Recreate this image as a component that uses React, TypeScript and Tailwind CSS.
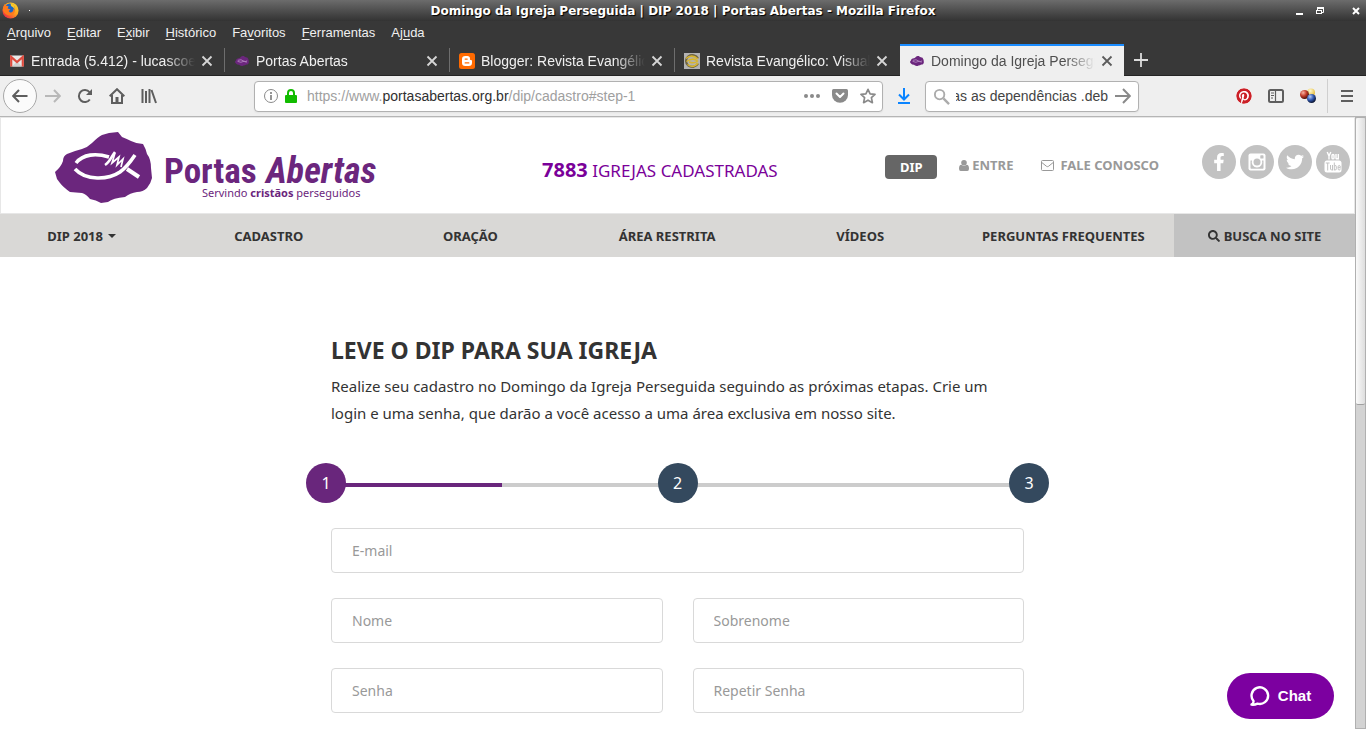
import type { ReactNode } from "react";
import { FaFacebookF, FaPinterest, FaSearch, FaTwitter } from "react-icons/fa";

const ARIAL = "font-['Liberation_Sans',Arial,sans-serif]";

const BLOB =
  "M0 40 Q6 35 8 29 Q8 24 12 22 Q19 19 27 17 Q33 15 37 11 Q43 5 47 3 L54 1 L63 0 L67 5 Q72 7 76 9 Q82 12 88 12 Q91 17 92 22 Q96 27 96 36 L97 46 Q96 51 92 56 Q88 60 82 60 Q75 61 70 65 Q58 66 53 70 L46 71 Q41 68 35 67 Q31 62 27 61 L15 60 Q8 55 5 51 L2 47 Z";

function Fish() {
  return (
    <g fill="none" stroke="#fff">
      <path d="M21 31 C28 22 41 21 54 25" strokeWidth="3.6" />
      <path d="M20 37 C31 49 53 48 65 40 C72 35 76 29 80 23" strokeWidth="3.6" />
      <path d="M50 33 C55 30 56 25 60 20" strokeWidth="2.6" />
      <path d="M60 21 L57 31 L64 25 L62 33 L68 27 L66 35" strokeWidth="1.7" />
      <path d="M72 37 L84 45" strokeWidth="4" />
    </g>
  );
}

function MiniLogo() {
  return (
    <svg viewBox="0 0 98 71" className="h-4 w-3.5 shrink-0" aria-hidden="true">
      <path d={BLOB} fill="#6b267d" />
      <path d="M20 31 Q44 20 60 36 T82 32 M18 38 Q40 52 66 36 M72 38 L84 44" fill="none" stroke="#c39bcf" strokeWidth="5" />
    </svg>
  );
}

function FirefoxIcon() {
  return (
    <svg viewBox="0 0 18 18" className="h-[17px] w-[17px]" aria-hidden="true">
      <defs>
        <linearGradient id="ff" x1="1" y1="0" x2="0.1" y2="1">
          <stop offset="0" stopColor="#ffe226" />
          <stop offset=".5" stopColor="#ff9a1f" />
          <stop offset="1" stopColor="#e9184a" />
        </linearGradient>
      </defs>
      <circle cx="9" cy="9" r="8.5" fill="url(#ff)" />
      <path d="M4 4.500 C5 1.500 9 .5 12 3 C14 5 14 9 12 11 C9 13.500 5 12 4.500 9Z" fill="#1766c9" />
      <path d="M.8 8 C1 5 2 3 3 2 L4 4 L7 4.500 L6 7 L9 8 L7 9.500 L8.500 11.200 C11 11.500 12.500 9.500 12 7 C14.500 8 14 12 11 13.500 C7 15.500 2 13 .8 8Z" fill="#ff7a1c" />
      <path d="M9 1 C12 2 14 4 13.500 8 C12 5.500 10.500 5 9.500 4Z" fill="#ffc928" />
    </svg>
  );
}

function GmailIcon() {
  return (
    <svg viewBox="0 0 14 11" className="mx-px h-3 w-3.5 shrink-0" aria-hidden="true">
      <rect width="14" height="11" rx="1" fill="#e9e9e9" />
      <path d="M2 11 L7 6 L12 11" fill="#cfcfcf" />
      <path d="M1.200 11 V1.400 L7 6.500 L12.800 1.400 V11" fill="none" stroke="#dd4b3e" strokeWidth="2.200" />
    </svg>
  );
}

function BloggerIcon() {
  return (
    <svg viewBox="0 0 16 16" className="h-4 w-4 shrink-0" aria-hidden="true">
      <rect width="16" height="16" rx="2.500" fill="#ff6a00" />
      <path d="M6.300 3 H8.300 A2.700 2.700 0 0 1 11 5.700 V6.500 Q11.200 7 12 7 Q13 7 13 8 V9.700 A3.300 3.300 0 0 1 9.700 13 H6.300 A3.300 3.300 0 0 1 3 9.700 V6.300 A3.300 3.300 0 0 1 6.300 3Z" fill="#fff" />
      <path d="M6.200 6.100 H8.200 M6.200 9.900 H9.800" stroke="#ff6a00" strokeWidth="1.300" strokeLinecap="round" />
    </svg>
  );
}

function RevistaIcon() {
  return (
    <svg viewBox="0 0 16 16" className="h-4 w-4 shrink-0" aria-hidden="true">
      <rect width="16" height="16" fill="#b3b3b3" />
      <path d="M14 5.500 A6.300 5.800 0 1 0 14 10.500" fill="none" stroke="#6f6440" strokeWidth="2.200" />
      <path d="M2 5.500 Q8 .5 14 6 M2.500 8.500 Q9 4 13.500 8 Q11 11 5 9 M14 10 Q9 16 3.500 11.500" fill="none" stroke="#d8b62f" strokeWidth="1.500" />
    </svg>
  );
}

function Cross({ color }: { color: string }) {
  return (
    <svg viewBox="0 0 12 12" className="h-3 w-3" aria-hidden="true">
      <path d="M1.500 1.500 L10.500 10.500 M10.500 1.500 L1.500 10.500" stroke={color} strokeWidth="1.800" />
    </svg>
  );
}

function Tab({ icon, title, active = false }: { icon: ReactNode; title: string; active?: boolean }) {
  return (
    <div
      className={
        active
          ? "flex h-8 w-56 min-w-0 items-center border-t-2 border-[#1a8cff] bg-[#efefef] pr-[11px] pl-[9px] text-[#4f4f4f]"
          : "flex h-8 w-[225px] min-w-0 items-center border-t-2 border-transparent pr-3 pl-[9px] text-[#f0f0f0]"
      }
    >
      <span className="flex w-4 shrink-0 justify-center">{icon}</span>
      <span className="ml-1.5 min-w-0 flex-1 overflow-hidden text-[14px] leading-5 whitespace-nowrap [mask-image:linear-gradient(to_right,black_82%,transparent)]">
        {title}
      </span>
      <button type="button" aria-label={"Fechar " + title} className="ml-1.5 shrink-0">
        <Cross color={active ? "#5c5c5c" : "#d6d6d6"} />
      </button>
    </div>
  );
}

const menus: [string, string, string][] = [
  ["", "A", "rquivo"],
  ["", "E", "ditar"],
  ["E", "x", "ibir"],
  ["", "H", "istórico"],
  ["Fa", "v", "oritos"],
  ["", "F", "erramentas"],
  ["Aj", "u", "da"],
];

function ToolIcon({ label, children, color = "text-[#5e5e5e]" }: { label: string; children: ReactNode; color?: string }) {
  return (
    <button type="button" aria-label={label} className={"flex h-8 w-8 shrink-0 items-center justify-center " + color}>
      <svg viewBox="0 0 16 16" className="h-4 w-4" fill="none" stroke="currentColor" strokeWidth="2">
        {children}
      </svg>
    </button>
  );
}

function BrowserChrome() {
  return (
    <div className={ARIAL}>
      <div className="grid h-[21px] grid-cols-[1fr_auto_1fr] items-center bg-linear-to-b from-[#6c6c6c] to-[#333333]">
        <div className="flex items-center gap-2.5 pl-0.5">
          <FirefoxIcon />
          <span className="h-px w-px bg-white" />
        </div>
        <span className="font-['DejaVu_Sans',sans-serif] text-[12px] leading-4 font-bold text-white [text-shadow:1px_1px_1px_#000]">
          Domingo da Igreja Perseguida | DIP 2018 | Portas Abertas - Mozilla Firefox
        </span>
        <div className="flex items-center justify-end pr-1.5">
          <button type="button" aria-label="Minimizar" className="mr-3 flex h-2 w-2 items-end">
            <span className="block h-0.5 w-[7px] bg-white" />
          </button>
          <button type="button" aria-label="Restaurar" className="mr-7">
            <svg viewBox="0 0 8 8" className="h-2 w-2" fill="none" stroke="#fff">
              <path d="M1.500 3 V1 H7.500 V5.500 H6" />
              <path d="M1 1 H8" strokeWidth="2" />
              <rect x=".5" y="3.500" width="5" height="3" />
            </svg>
          </button>
          <button type="button" aria-label="Fechar">
            <svg viewBox="0 0 8 8" className="h-2 w-2">
              <path d="M1 1 L7 7 M7 1 L1 7" stroke="#fff" strokeWidth="2" />
            </svg>
          </button>
        </div>
      </div>

      <div className="bg-[#383838]">
        <nav className="flex h-[23px] items-center gap-4 px-[7px] text-[13px] leading-4 text-[#f0f0f0]">
          {menus.map(([before, key, after]) => (
            <button type="button" key={before + key + after}>
              {before}
              <span className="underline underline-offset-2">{key}</span>
              {after}
            </button>
          ))}
        </nav>
        <div className="flex h-8 items-center border-b border-[#242424]">
          <Tab icon={<GmailIcon />} title="Entrada (5.412) - lucascoe@" />
          <span className="-ml-px h-6 w-px bg-[#6e6e6e]" />
          <Tab icon={<MiniLogo />} title="Portas Abertas" />
          <span className="-ml-px h-6 w-px bg-[#6e6e6e]" />
          <Tab icon={<BloggerIcon />} title="Blogger: Revista Evangélico" />
          <span className="-ml-px h-6 w-px bg-[#6e6e6e]" />
          <Tab icon={<RevistaIcon />} title="Revista Evangélico: Visualizar" />
          <Tab icon={<MiniLogo />} title="Domingo da Igreja Perseguida" active />
          <button type="button" aria-label="Nova aba" className="ml-2.5">
            <svg viewBox="0 0 14 14" className="h-3.5 w-3.5">
              <path d="M7 0 V14 M0 7 H14" stroke="#dcdcdc" strokeWidth="1.800" />
            </svg>
          </button>
        </div>
      </div>

      <div className="flex h-[41px] items-center border-b border-[#b5b5b5] bg-[#efefef]">
        <button
          type="button"
          aria-label="Voltar"
          className="ml-[3px] flex h-[34px] w-[34px] shrink-0 items-center justify-center rounded-full border border-[#a8a8a8] bg-[#fbfbfb] text-[#5e5e5e]"
        >
          <svg viewBox="0 0 16 16" className="h-4 w-4" fill="none" stroke="currentColor" strokeWidth="2">
            <path d="M15.500 8 H1.500 M7 2 L1.200 8 L7 14" />
          </svg>
        </button>
        <ToolIcon label="Avançar" color="text-[#b8b8b8]">
          <path d="M0 8 H14 M9 2 L14.800 8 L9 14" />
        </ToolIcon>
        <ToolIcon label="Recarregar">
          <path d="M12.800 11.500 A6 6 0 1 1 12.500 4.200" />
          <path d="M15 1 V7 H9Z" fill="currentColor" stroke="none" />
        </ToolIcon>
        <ToolIcon label="Início">
          <path d="M.700 8.300 L8 1.200 L15.300 8.300" />
          <path d="M3 7 V15 H13 V7" />
          <path d="M8 9 V15" strokeWidth="3" />
        </ToolIcon>
        <ToolIcon label="Biblioteca">
          <path d="M1.500 1 V15 M5 3 V15 M8.500 1 V15 M10.500 2 L15 15" />
        </ToolIcon>

        <div className="ml-[89px] flex h-[31px] w-[629px] items-center rounded border border-[#b1b1b1] bg-white pr-1.5 pl-[9px] shadow-xs">
          <svg viewBox="0 0 14 14" className="h-3.5 w-3.5 shrink-0" fill="none" stroke="#8a8a8a">
            <circle cx="7" cy="7" r="6.500" />
            <path d="M7 6 V11 M7 3 V5" strokeWidth="1.800" />
          </svg>
          <svg viewBox="0 0 12 14" className="ml-[7px] h-3.5 w-3 shrink-0">
            <path d="M3 7 V4 A3 3 0 0 1 9 4 V7" fill="none" stroke="#12bc00" strokeWidth="2" />
            <rect y="6" width="12" height="8" rx="1" fill="#12bc00" />
          </svg>
          <span className="ml-2.5 flex-1 text-[14px] leading-5 text-[#a0a0a0]">
            https://www.<span className="text-[#303030]">portasabertas.org.br</span>/dip/cadastro#step-1
          </span>
          <svg viewBox="0 0 16 4" className="h-1 w-4" fill="#8a8a8a">
            <circle cx="2" cy="2" r="2" />
            <circle cx="8" cy="2" r="2" />
            <circle cx="14" cy="2" r="2" />
          </svg>
          <svg viewBox="0 0 16 16" className="ml-3 h-4 w-4">
            <path d="M1.500 1 H14.500 Q16 1 16 2.500 V7 A8 7.800 0 0 1 0 7 V2.500 Q0 1 1.500 1Z" fill="#8a8a8a" />
            <path d="M4.500 5.500 L8 9 L11.500 5.500" fill="none" stroke="#fff" strokeWidth="2" strokeLinecap="round" strokeLinejoin="round" />
          </svg>
          <svg viewBox="0 0 16 16" className="ml-3 h-4 w-4">
            <path d="M8 1.300 L10.100 5.800 L15 6.400 L11.400 9.700 L12.400 14.700 L8 12.200 L3.600 14.700 L4.600 9.700 L1 6.400 L5.900 5.800Z" fill="none" stroke="#8a8a8a" strokeWidth="1.700" strokeLinejoin="round" />
          </svg>
        </div>
        <ToolIcon label="Downloads" color="mx-[5px] text-[#0a84ff]">
          <path d="M8 0 V11 M3 6.500 L8 11.500 L13 6.500 M2 15 H14" />
        </ToolIcon>
        <div className="flex h-[31px] w-[214px] items-center rounded border border-[#b1b1b1] bg-white px-[7px] shadow-xs">
          <svg viewBox="0 0 18 18" className="h-[17px] w-[17px] shrink-0" fill="none" stroke="#ababab" strokeWidth="2">
            <circle cx="7" cy="7" r="5" />
            <path d="M11 11 L17 17" strokeWidth="2.500" />
          </svg>
          <span className="ml-1.5 flex min-w-0 flex-1 justify-end overflow-hidden">
            <span className="text-[14px] leading-5 whitespace-nowrap text-[#444]">as as dependências .deb</span>
          </span>
          <svg viewBox="0 0 16 16" className="ml-[7px] h-4 w-4 shrink-0" fill="none" stroke="#8a8a8a" strokeWidth="2">
            <path d="M0 8 H14 M8 1 L14.800 8 L8 15" />
          </svg>
        </div>
        <div className="ml-auto flex items-center">
          <button type="button" aria-label="Pinterest" className="flex h-8 w-8 items-center justify-center">
            <FaPinterest className="h-4 w-4 rounded-full bg-white text-[#cb2027]" />
          </button>
          <ToolIcon label="Painéis">
            <rect x="1" y="2" width="14" height="12" rx="1.500" />
            <path d="M7.500 2 V14" strokeWidth="1.200" />
            <path d="M3 5 H6 M3 7.500 H6 M3 10 H5" strokeWidth="1" />
          </ToolIcon>
          <button type="button" aria-label="Extensão" className="flex h-8 w-8 items-center justify-center">
            <svg viewBox="0 0 16 16" className="h-4 w-4">
              <defs>
                <radialGradient id="br" cx=".35" cy=".3" r=".75">
                  <stop offset="0" stopColor="#f9b5a4" />
                  <stop offset=".5" stopColor="#c23c2a" />
                  <stop offset="1" stopColor="#3d0a04" />
                </radialGradient>
                <radialGradient id="by" cx=".4" cy=".3" r=".75">
                  <stop offset="0" stopColor="#fffbd0" />
                  <stop offset="1" stopColor="#e3b42a" />
                </radialGradient>
                <radialGradient id="bb" cx=".35" cy=".3" r=".75">
                  <stop offset="0" stopColor="#b5cbf7" />
                  <stop offset=".5" stopColor="#3058b0" />
                  <stop offset="1" stopColor="#050b20" />
                </radialGradient>
              </defs>
              <circle cx="11" cy="4.500" r="4" fill="url(#by)" />
              <circle cx="4.500" cy="6.500" r="4.500" fill="url(#br)" />
              <circle cx="11.500" cy="10.500" r="4.500" fill="url(#bb)" />
            </svg>
          </button>
          <span className="mx-[3px] h-[34px] w-px bg-[#cfcfcf]" />
          <ToolIcon label="Menu">
            <path d="M2 3 H14 M2 8 H14 M2 13 H14" />
          </ToolIcon>
          <span className="w-[3px]" />
        </div>
      </div>
    </div>
  );
}

const CONDENSED = "'Liberation Sans Narrow', 'Roboto Condensed', 'Open Sans', sans-serif";

function BrandLogo() {
  return (
    <a href="#inicio" aria-label="Portas Abertas" className="block shrink-0">
      <svg viewBox="0 0 325 72" className="h-[72px] w-[325px]" fill="#6b267d">
        <path d={BLOB} />
        <Fish />
        <text x="109" y="51" fontFamily={CONDENSED} fontWeight="700" fontSize="35">
          Portas
        </text>
        <text x="211" y="51" fontFamily={CONDENSED} fontWeight="700" fontStyle="italic" fontSize="36">
          Abertas
        </text>
        <text x="147" y="65" fontFamily="'Noto Sans', sans-serif" fontSize="11">
          Servindo <tspan fontWeight="700">cristãos</tspan> perseguidos
        </text>
      </svg>
    </a>
  );
}

function Social({ label, children }: { label: string; children: ReactNode }) {
  return (
    <a href={"#" + label.toLowerCase()} aria-label={label} className="flex h-[34px] w-[34px] items-center justify-center rounded-full bg-[#c2c2c2] text-white">
      {children}
    </a>
  );
}

function SiteHeader() {
  return (
    <header>
      <div className="flex h-[97px] items-start border border-[#e7e7e7] bg-white pr-1">
        <div className="pt-3.5 pl-[54px]">
          <BrandLogo />
        </div>
        <p className="mt-[38px] ml-[162px] text-[17px] leading-7 whitespace-nowrap text-[#7a0099]">
          <strong className="text-[20px]">7883</strong> IGREJAS CADASTRADAS
        </p>
        <div className="ml-auto flex shrink-0 items-start text-[13px] leading-5 font-bold whitespace-nowrap text-[#999]">
          <a href="#dip" className="mt-[37px] flex h-6 w-[52px] items-center justify-center rounded bg-[#666] text-white">
            DIP
          </a>
          <a href="#entre" className="mt-[37px] ml-[22px] flex items-center gap-[3px]">
            <svg viewBox="0 0 10 11" className="h-[11px] w-2.5" fill="currentColor" aria-hidden="true">
              <circle cx="5" cy="2.800" r="2.800" />
              <path d="M2.300 4.800 Q5 7 7.700 4.800 Q10 5 10 8.800 Q10 11 8.300 11 H1.700 Q0 11 0 8.800 Q0 5 2.300 4.800Z" />
            </svg>
            ENTRE
          </a>
          <a href="#contato" className="mt-[37px] ml-7 flex items-center gap-1.5">
            <svg viewBox="0 0 13 11" className="h-[11px] w-[13px]" fill="none" stroke="currentColor" aria-hidden="true">
              <rect x=".5" y=".5" width="12" height="10" rx="1" />
              <path d="M.8 2.500 L5.500 6.300 Q6.500 7 7.500 6.300 L12.200 2.500" />
            </svg>
            FALE CONOSCO
          </a>
          <div className="mt-[27px] ml-[43px] flex gap-1">
            <Social label="Facebook">
              <FaFacebookF className="h-[18px] w-[18px]" />
            </Social>
            <Social label="Instagram">
              <svg viewBox="0 0 18 18" className="h-[18px] w-[18px]">
                <rect x=".5" y=".5" width="17" height="17" rx="2" fill="#fff" />
                <path d="M2.500 7.500 H4 A5.300 5.300 0 1 0 14 7.500 H15.500 V15 Q15.500 15.700 14.800 15.700 H3.200 Q2.500 15.700 2.500 15Z" fill="#c2c2c2" />
                <circle cx="9" cy="9" r="3.500" fill="#c2c2c2" />
                <rect x="12.300" y="2.300" width="3.200" height="3.200" rx=".6" fill="#c2c2c2" />
              </svg>
            </Social>
            <Social label="Twitter">
              <FaTwitter className="h-[18px] w-[18px]" />
            </Social>
            <Social label="YouTube">
              <svg viewBox="0 0 18 22" className="h-[22px] w-[18px]" fill="none" stroke="#fff" strokeWidth="1.400">
                <path d="M3.200 1 L5 5 L6.800 1 M5 5 V8.500" />
                <rect x="8" y="3.500" width="2" height="4.400" rx="1" />
                <path d="M12 3 V7.300 Q12.600 8.400 14.300 7 M14.300 3 V8.500" />
                <rect x=".5" y="9.500" width="17" height="12" rx="2.500" fill="#fff" stroke="none" />
                <g stroke="#c2c2c2" strokeWidth="1">
                  <path d="M1.800 12 H5.600 M3.700 12 V19.500" />
                  <path d="M6.500 14 V18.300 Q6.900 19.600 8.500 18.200 M8.500 14 V19.500" />
                  <path d="M10.300 11.500 V19.500 M10.300 15 Q12.300 13.500 12.300 15.800 V17.800 Q12.300 19.800 10.300 18.500" />
                  <path d="M16.300 17.500 Q16.300 19 15.200 19 Q14.100 19 14.100 17.700 V15.800 Q14.100 14.500 15.200 14.500 Q16.300 14.500 16.300 15.800 V16.600 H14.100" />
                </g>
              </svg>
            </Social>
          </div>
        </div>
      </div>
      <nav className="flex h-[43px] bg-[#d9d8d6] text-[13px] leading-5 font-bold whitespace-nowrap text-[#333]">
        <div className="grid flex-1 grid-cols-[163fr_211fr_192fr_201fr_185fr_221fr] items-center text-center">
          <a href="#dip-2018" className="flex items-center justify-center gap-[5px]">
            DIP 2018
            <span className="border-x-4 border-t-4 border-x-transparent border-t-[#333]" />
          </a>
          <a href="#cadastro">CADASTRO</a>
          <a href="#oracao">ORAÇÃO</a>
          <a href="#area">ÁREA RESTRITA</a>
          <a href="#videos">VÍDEOS</a>
          <a href="#perguntas">PERGUNTAS FREQUENTES</a>
        </div>
        <a href="#busca" className="flex w-[181px] items-center justify-center gap-1 bg-[#c2c2c2]">
          <FaSearch className="h-3 w-3" />
          BUSCA NO SITE
        </a>
      </nav>
    </header>
  );
}

function Field({ label, type = "text", wide = false }: { label: string; type?: string; wide?: boolean }) {
  return (
    <label className={wide ? "col-span-2" : ""}>
      <input
        type={type}
        aria-label={label}
        placeholder={label}
        className="block h-[45px] w-full rounded border border-[#d9d9d9] bg-white px-5 text-[14px] text-[#333] placeholder:text-[#999]"
      />
    </label>
  );
}

function Step({ n, active = false }: { n: number; active?: boolean }) {
  return (
    <li
      className={
        active
          ? "relative flex h-10 w-10 items-center justify-center rounded-full bg-[#69267c] text-[16px] text-white"
          : "relative flex h-10 w-10 items-center justify-center rounded-full bg-[#34495e] text-[16px] text-white"
      }
    >
      {n}
    </li>
  );
}

function Signup() {
  return (
    <main className="mx-auto w-[693px] max-w-full pt-[75px] text-[#333]">
      <h1 className="text-[23px] leading-9 font-bold">LEVE O DIP PARA SUA IGREJA</h1>
      <p className="mt-[5px] text-[15px] leading-[27px]">
        Realize seu cadastro no Domingo da Igreja Perseguida seguindo as próximas etapas. Crie um
        <br />
        login e uma senha, que darão a você acesso a uma área exclusiva em nosso site.
      </p>
      <div className="relative -mx-[25px] mt-9">
        <div className="absolute inset-x-5 top-5 flex h-1 bg-[#ccc]">
          <span className="w-1/4 bg-[#69267c]" />
        </div>
        <ol className="flex justify-between">
          <Step n={1} active />
          <Step n={2} />
          <Step n={3} />
        </ol>
      </div>
      <form className="mt-[25px] grid grid-cols-2 gap-x-[30px] gap-y-[25px]">
        <Field label="E-mail" type="email" wide />
        <Field label="Nome" />
        <Field label="Sobrenome" />
        <Field label="Senha" type="password" />
        <Field label="Repetir Senha" type="password" />
      </form>
    </main>
  );
}

export default function App() {
  return (
    <div className="flex h-screen flex-col overflow-hidden bg-white">
      <BrowserChrome />
      <div className="flex min-h-0 flex-1">
        <div className="min-w-0 flex-1 overflow-hidden font-['Noto_Sans',sans-serif]">
          <SiteHeader />
          <Signup />
        </div>
        <div className="w-[11px] shrink-0 border border-[#b0b0b0] bg-[#d3d3d3]">
          <div className="h-[47%] rounded-xs border-b border-[#a0a0a0] bg-linear-to-r from-[#fafafa] to-[#dedede]" />
        </div>
      </div>
      <button
        type="button"
        className={
          "fixed right-8 bottom-2.5 flex h-[46px] w-[107px] items-center justify-center gap-2 rounded-full bg-[#7c00a0] text-[15px] font-bold text-white " + ARIAL
        }
      >
        <svg viewBox="0 0 20 20" className="h-5 w-5" fill="none" stroke="#fff" strokeWidth="2.400">
          <path d="M3.500 15 A8.300 8.300 0 1 1 7.500 17.600 Q4.500 19 1.500 18.600 Q3.800 17.200 3.500 15Z" strokeLinejoin="round" />
        </svg>
        Chat
      </button>
    </div>
  );
}
